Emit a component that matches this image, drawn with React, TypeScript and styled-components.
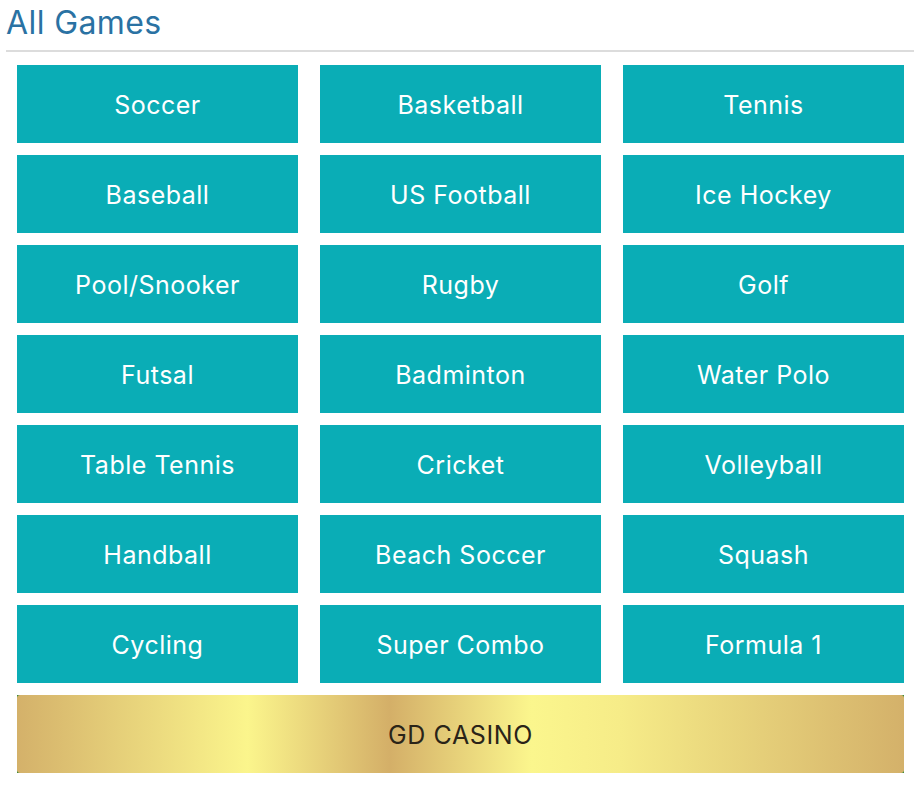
import styled, { createGlobalStyle } from 'styled-components';

const GlobalStyle = createGlobalStyle`
  body {
    margin: 0;
    background: #ffffff;
    font-family: Inter, "Noto Sans", sans-serif;
  }
`;

const Page = styled.div`
  width: 920px;
  padding: 0 6px;
  box-sizing: border-box;
`;

const Title = styled.h1`
  margin: 0;
  padding: 3px 0 8px 0;
  font-size: 32px;
  font-weight: 400;
  line-height: 39px;
  letter-spacing: 0.4px;
  color: #2a72a3;
  border-bottom: 2px solid #dcdcdc;
`;

const Grid = styled.div`
  display: grid;
  grid-template-columns: repeat(3, 281px);
  column-gap: 22px;
  row-gap: 12px;
  padding: 13px 0 0 11px;
`;

const GameButton = styled.button`
  height: 78px;
  padding: 2px 0 0;
  border: none;
  background: #0aadb6;
  color: #ffffff;
  font-family: Inter, "Noto Sans", sans-serif;
  font-size: 25px;
  font-weight: 400;
  letter-spacing: 0.5px;
  cursor: pointer;
`;

const CasinoFrame = styled.div`
  grid-column: 1 / -1;
  height: 78px;
  display: flex;
  background: #2f8a3a;
`;

const CasinoButton = styled.button`
  flex: 1;
  border: none;
  border-radius: 3px;
  padding: 2px 0 0;
  background: linear-gradient(
    to right,
    #d4b16a 0%,
    #fbf58c 26%,
    #d4af68 42%,
    #fbf68d 58%,
    #f6ec88 68%,
    #d4b16a 100%
  );
  color: #2a2418;
  font-family: Inter, "Noto Sans", sans-serif;
  font-size: 25px;
  letter-spacing: 0.6px;
  cursor: pointer;
`;

const games = [
  'Soccer', 'Basketball', 'Tennis',
  'Baseball', 'US Football', 'Ice Hockey',
  'Pool/Snooker', 'Rugby', 'Golf',
  'Futsal', 'Badminton', 'Water Polo',
  'Table Tennis', 'Cricket', 'Volleyball',
  'Handball', 'Beach Soccer', 'Squash',
  'Cycling', 'Super Combo', 'Formula 1',
];

const App = () => {
  return (
    <>
      <GlobalStyle />
      <Page>
        <Title>All Games</Title>
        <Grid>
          {games.map((g) => (
            <GameButton key={g}>{g}</GameButton>
          ))}
          <CasinoFrame>
            <CasinoButton>GD CASINO</CasinoButton>
          </CasinoFrame>
        </Grid>
      </Page>
    </>
  );
};

export default App;
